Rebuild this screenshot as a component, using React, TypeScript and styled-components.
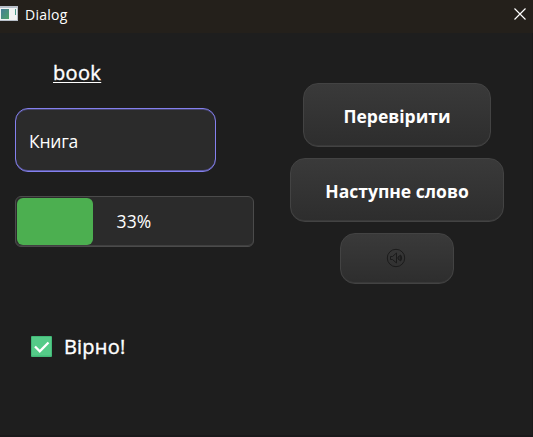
import React from "react";
import styled, { createGlobalStyle } from "styled-components";

const GlobalStyle = createGlobalStyle`
  * { box-sizing: border-box; }
  body { margin: 0; background: #1e1e1e; overflow: hidden; }
`;

const Window = styled.div`
  width: 533px;
  height: 437px;
  background: #1e1e1e;
  border-right: 1px solid #1a1a1a;
  border-bottom: 2px solid #1a191a;
  color: #fff;
  font-family: "Open Sans", "Noto Sans", sans-serif;
  display: flex;
  flex-direction: column;
`;

const TitleBar = styled.header`
  height: 33px;
  flex: none;
  background: #24201b;
  display: flex;
  align-items: flex-start;
  margin-right: -1px;
`;

const AppIcon = styled.svg`
  width: 18px;
  height: 16px;
  margin-top: 6px;
`;

const WindowTitle = styled.h1`
  margin: 5px auto 0 7px;
  font-size: 14px;
  line-height: 20px;
  font-weight: 400;
  letter-spacing: 0.25px;
`;

const CloseButton = styled.button`
  border: 0;
  padding: 0;
  background: none;
  width: 14px;
  height: 14px;
  margin: 7px 6px 0 0;
  svg { display: block; }
`;

const Content = styled.main`
  display: grid;
  grid-template-columns: 239px 214px;
  column-gap: 36px;
  padding-left: 15px;
`;

const Exercise = styled.section`
  display: flex;
  flex-direction: column;
`;

const Word = styled.div`
  margin: 26px 0 0 38px;
  height: 28px;
  font-size: 20px;
  line-height: 28px;
  -webkit-text-stroke: 0.4px #fff;
  letter-spacing: 0.35px;
  text-decoration: underline;
  text-decoration-thickness: 1px;
  text-underline-offset: 2px;
`;

const Answer = styled.input`
  margin-top: 21px;
  width: 201px;
  height: 64px;
  padding: 2px 13px 0;
  border: 1px solid #8480ee;
  border-radius: 13px;
  background: #2b2b2b;
  box-shadow: inset 0 1px #45436b, inset 0 -1px #5b58a0;
  color: #fff;
  font: 400 17.5px "Open Sans", "Noto Sans", sans-serif;
  letter-spacing: -0.2px;
  outline: none;
`;

const Progress = styled.div`
  margin-top: 24px;
  height: 51px;
  border: 1px solid #4b4b4b;
  border-radius: 6px;
  background: #2b2b2b;
  box-shadow: inset 0 -1px #404040;
  padding: 1px;
  display: grid;
  align-items: center;
`;

const ProgressFill = styled.div`
  grid-area: 1 / 1;
  width: 76px;
  height: 47px;
  border-radius: 6px;
  background: #4caf50;
`;

const ProgressLabel = styled.span`
  grid-area: 1 / 1;
  text-align: center;
  font-size: 17.5px;
  line-height: 24px;
  letter-spacing: 0.2px;
  padding: 0 1px 2px 0;
`;

const Result = styled.div`
  margin: 84px 0 0 16px;
  height: 31px;
  display: flex;
  align-items: center;
  gap: 12px;
  font-size: 20px;
  letter-spacing: 0.2px;
  -webkit-text-stroke: 0.4px #fff;
`;

const Actions = styled.section`
  display: flex;
  flex-direction: column;
  align-items: center;
  gap: 11px;
  padding-top: 50px;
`;

const ActionButton = styled.button<{ $width: number; $height: number }>`
  width: ${(p) => p.$width}px;
  height: ${(p) => p.$height}px;
  padding: 2px 0 0;
  display: flex;
  align-items: center;
  justify-content: center;
  border: 1px solid #434343;
  border-radius: 15px;
  background: linear-gradient(#3a3a3a, #2d2d2d) border-box;
  box-shadow: inset 0 -1px #393939;
  color: #fff;
  font: 700 17.5px "Open Sans", "Noto Sans", sans-serif;
  white-space: nowrap;
`;

const SpeakerIcon = styled.svg`
  width: 20px;
  height: 20px;
  margin: -3px 2px 0 0;
`;

export default function App() {
  return (
    <>
      <GlobalStyle />
      <Window>
        <TitleBar>
          <AppIcon viewBox="0 0 18 16">
            <defs>
              <linearGradient id="preview" x2="1" y2="1">
                <stop stopColor="#477d98" />
                <stop offset="1" stopColor="#4ea267" />
              </linearGradient>
            </defs>
            <path fill="#b8bfc9" d="M0 0h18v15H0z" />
            <path fill="#f1f3f3" d="M0 2h17v12H0z" />
            <path fill="url(#preview)" d="M1 3h8v10H1z" />
            <path fill="#4b9c8b" d="M15 3h1v6h-1z" />
          </AppIcon>
          <WindowTitle>Dialog</WindowTitle>
          <CloseButton aria-label="Close">
            <svg width="14" height="14" viewBox="0 0 14 14">
              <path d="M1.5 1.5l11 11M12.5 1.5l-11 11" stroke="#fff" strokeWidth="1.15" />
            </svg>
          </CloseButton>
        </TitleBar>
        <Content>
          <Exercise>
            <Word>book</Word>
            <Answer defaultValue="Книга" spellCheck={false} />
            <Progress>
              <ProgressFill />
              <ProgressLabel>33%</ProgressLabel>
            </Progress>
            <Result>
              <svg width="21" height="21" viewBox="0 0 21 21">
                <rect width="21" height="21" rx="1" fill="#42b978" />
                <rect x="1" y="1" width="19" height="18.5" fill="#55cb88" />
                <path d="M4 10.5l4.8 4.8L17.5 6.5" fill="none" stroke="#fff" strokeWidth="2.3" />
              </svg>
              <span>Вірно!</span>
            </Result>
          </Exercise>
          <Actions>
            <ActionButton $width={188} $height={64}>Перевірити</ActionButton>
            <ActionButton $width={214} $height={64}>Наступне слово</ActionButton>
            <ActionButton $width={114} $height={51} aria-label="Sound">
              <SpeakerIcon viewBox="0 0 20 20" fill="none" stroke="#1b1b1b" strokeWidth="1">
                <circle cx="10" cy="10" r="8.7" />
                <path d="M4.5 8.5h2L10.5 5v10l-4-3.5h-2z" />
                <path d="M12 9l2.8-2v6L12 11zM15 8q1.5 2 0 4" fill="#1b1b1b" fillOpacity="0.4" />
              </SpeakerIcon>
            </ActionButton>
          </Actions>
        </Content>
      </Window>
    </>
  );
}
